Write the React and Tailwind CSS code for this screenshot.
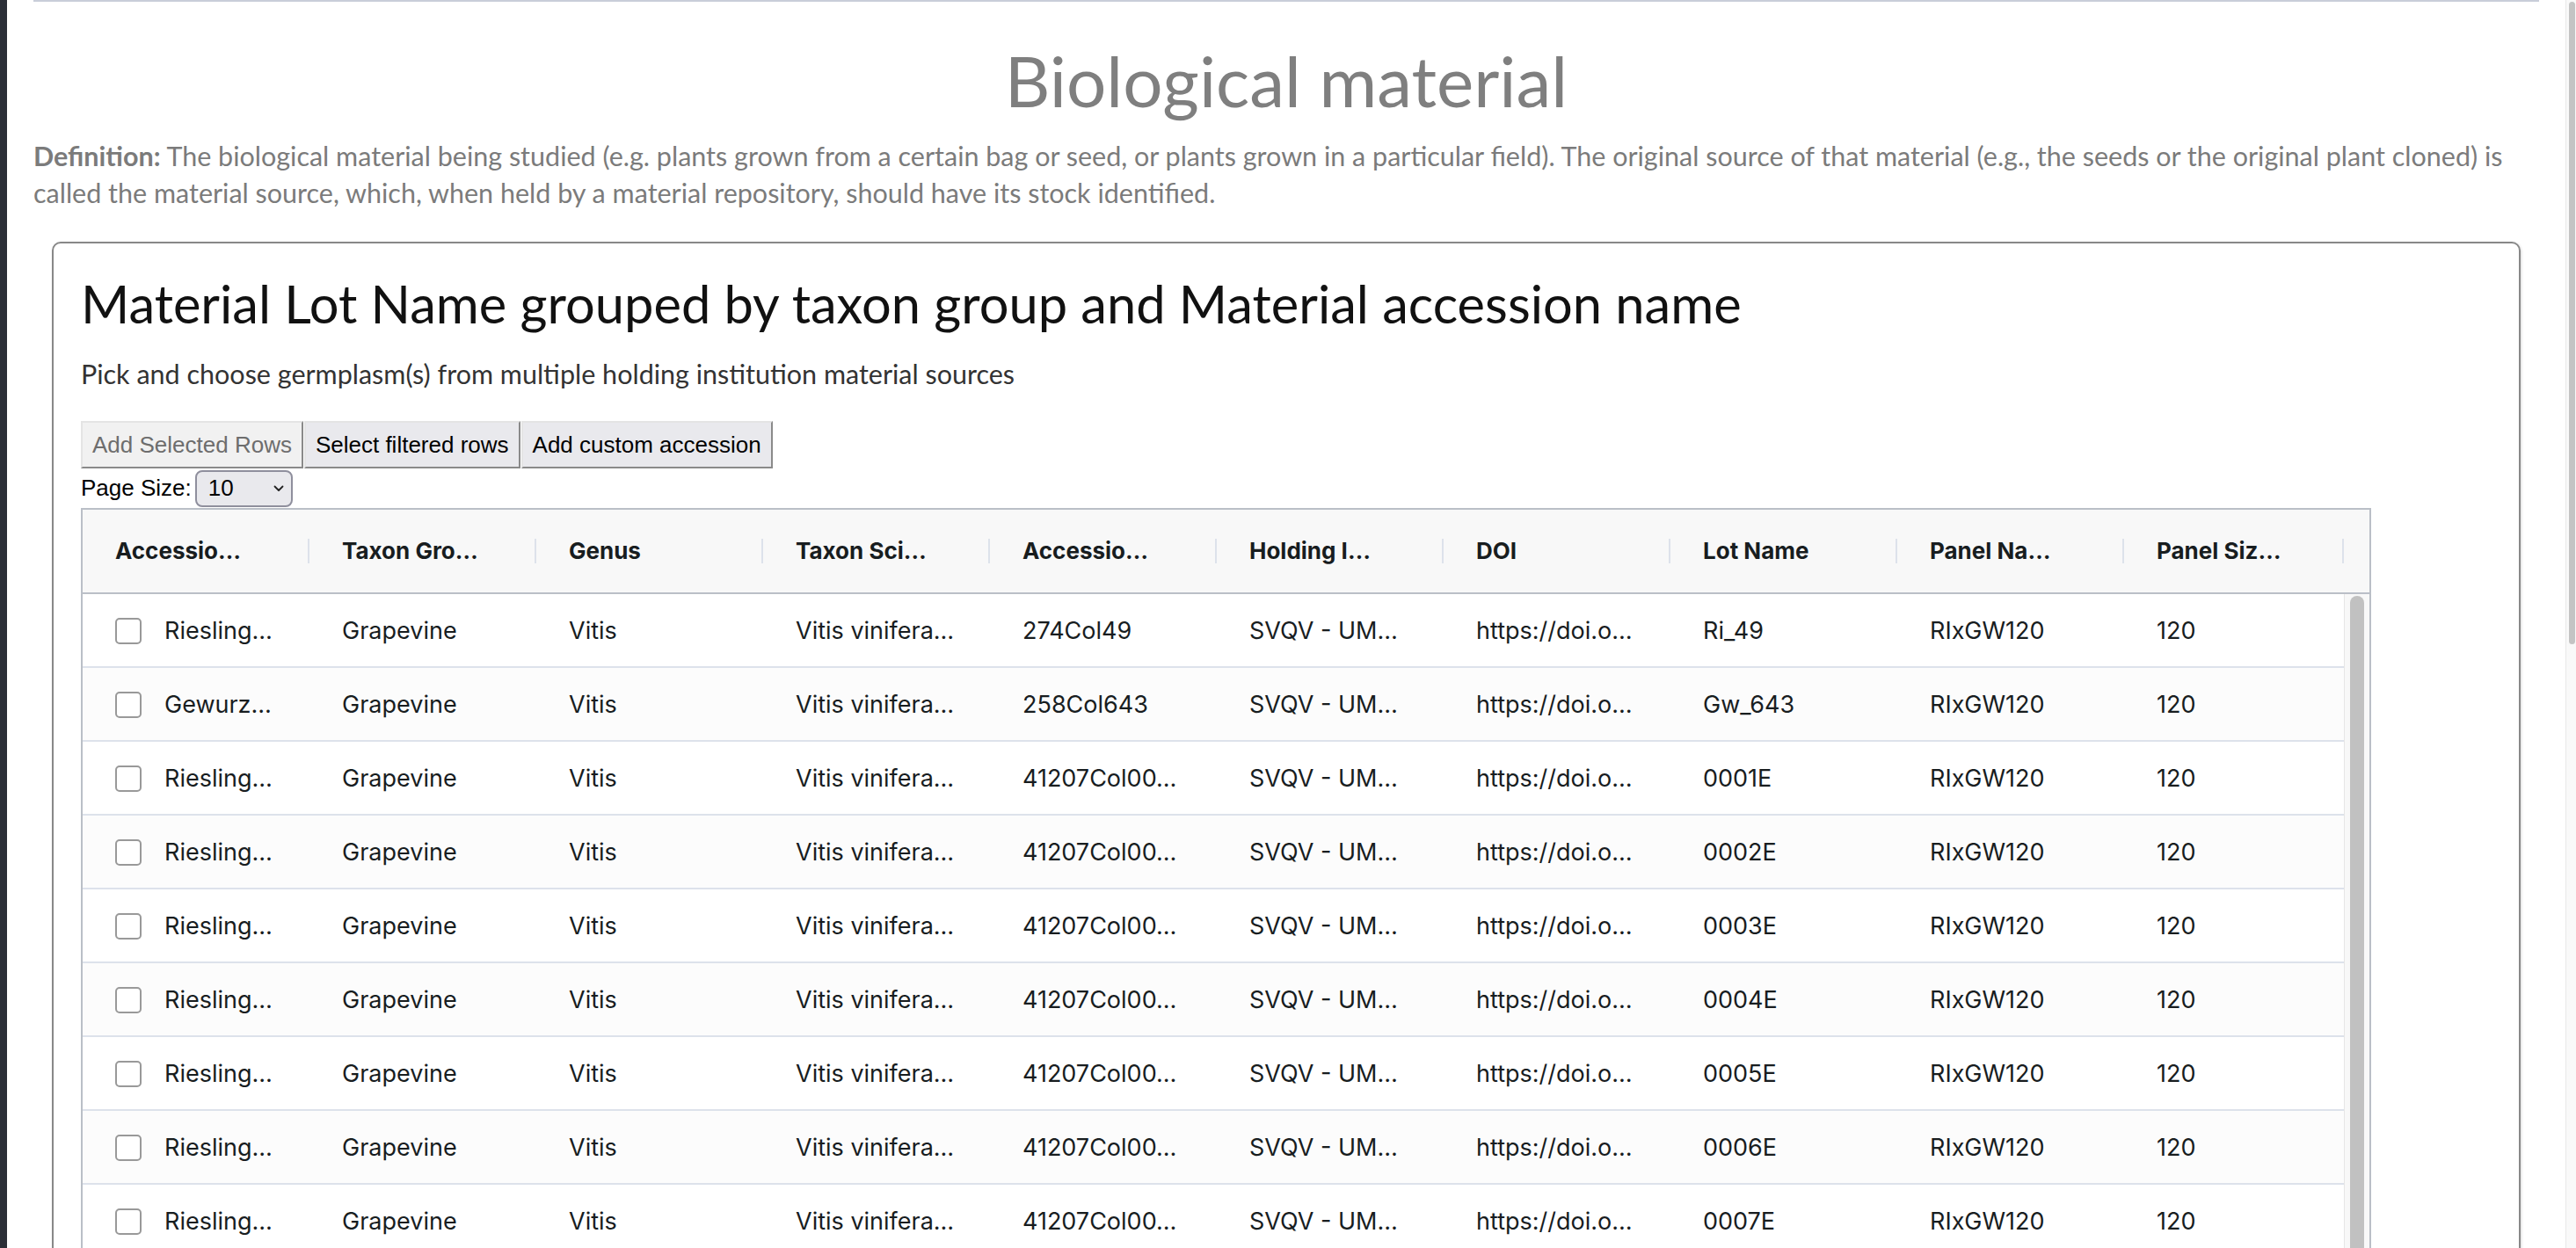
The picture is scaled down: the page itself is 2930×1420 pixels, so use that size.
import React from 'react';

const columns = [
  'Accessio…',
  'Taxon Gro…',
  'Genus',
  'Taxon Sci…',
  'Accessio…',
  'Holding I…',
  'DOI',
  'Lot Name',
  'Panel Na…',
  'Panel Siz…',
];

const lots = ['0001E', '0002E', '0003E', '0004E', '0005E', '0006E', '0007E'];

const rows = [
  ['Riesling…', '274Col49', 'Ri_49'],
  ['Gewurz…', '258Col643', 'Gw_643'],
  ...lots.map((lot) => ['Riesling…', '41207Col00…', lot]),
].map(([name, accession, lot]) => [
  name,
  'Grapevine',
  'Vitis',
  'Vitis vinifera…',
  accession,
  'SVQV - UM…',
  'https://doi.o…',
  lot,
  'RIxGW120',
  '120',
]);

function ActionButton({ children, disabled }) {
  return (
    <button
      disabled={disabled}
      className={`h-[54px] px-[11px] border-2 border-t-[#e4e4e4] border-l-[#e4e4e4] border-b-[#8a8a8a] border-r-[#8a8a8a] font-['Liberation_Sans',Arial,sans-serif] text-[26px] leading-none ${
        disabled ? 'bg-[#f1f1f1] text-[#6d6d6d]' : 'bg-[#e9e9ed] text-black'
      }`}
    >
      {children}
    </button>
  );
}

function MaterialGrid() {
  return (
    <div className="mt-[1px] w-[2605px] border-2 border-[#babfc7] font-['Inter',sans-serif] text-[#181d1f]">
      {/* Header */}
      <div className="flex h-[96px] bg-[#f8f8f8] border-b-2 border-[#babfc7] text-[26px]">
        <div className="grid grid-cols-[repeat(9,258px)_250px]">
          {columns.map((col, i) => (
            <div key={i} className="flex items-center justify-between pl-[37px]">
              <span className="font-bold">{col}</span>
              <span className="h-[28px] w-[2px] bg-[#dde2eb]" />
            </div>
          ))}
        </div>
      </div>

      {/* Body */}
      <div className="flex text-[27px]">
        <div className="w-[2572px]">
          {rows.map((row, r) => (
            <div
              key={r}
              className={`grid grid-cols-[repeat(9,258px)_250px] h-[84px] border-b-2 border-[#dde2eb] ${
                r % 2 === 1 ? 'bg-[#fcfcfc]' : 'bg-white'
              }`}
            >
              {row.map((cell, c) => (
                <div key={c} className="flex items-center pl-[37px] pt-[3px] whitespace-nowrap">
                  {c === 0 && (
                    <span className="mr-[26px] h-[30px] w-[30px] shrink-0 rounded-[5px] border-2 border-[#999] bg-white" />
                  )}
                  {cell}
                </div>
              ))}
            </div>
          ))}
        </div>
        <div className="w-[29px] border-l border-[#e6e6e6] bg-[#f8f8f8] pl-[6px] pt-[2px]">
          <div className="h-[900px] w-[16px] rounded-full bg-[#c1c1c1]" />
        </div>
      </div>
    </div>
  );
}

export default function App() {
  return (
    <div className="flex h-[1420px] w-[2930px] overflow-hidden bg-white">
      <div className="w-[8px] shrink-0 bg-[#2b2f37]" />

      <main className="min-w-0 flex-1 px-[30px] font-['Lato',sans-serif]">
        <div className="h-[2px] bg-[#c9cdd9]" />

        <h1 className="mt-[49px] text-center text-[80px] leading-none text-[#7f7f7f]">
          Biological material
        </h1>

        <p className="mt-[25px] text-[30.5px] leading-[42px] text-[#7b7b7b]">
          <b>Definition:</b> The biological material being studied (e.g. plants grown from a
          certain bag or seed, or plants grown in a particular field). The original source of that
          material (e.g., the seeds or the original plant cloned) is called the material source,
          which, when held by a material repository, should have its stock identified.
        </p>

        <section className="mx-[21px] mt-[35px] rounded-[10px] border-2 border-[#888] pl-[31px] pt-[39px] shadow-[1px_1px_3px_rgba(0,0,0,0.15)]">
          <h2 className="text-[59.6px] leading-none text-[#111]">
            Material Lot Name grouped by taxon group and Material accession name
          </h2>
          <p className="mt-[28px] text-[30.5px] leading-[42px] text-[#333]">
            Pick and choose germplasm(s) from multiple holding institution material sources
          </p>

          <div className="mt-[33px] flex gap-[1px]">
            <ActionButton disabled>Add Selected Rows</ActionButton>
            <ActionButton>Select filtered rows</ActionButton>
            <ActionButton>Add custom accession</ActionButton>
          </div>

          <div className="mt-[2px] flex h-[42px] items-center font-['Liberation_Sans',Arial,sans-serif] text-[26px] text-black">
            <span>Page Size:</span>
            <div className="ml-[4px] flex h-[42px] w-[111px] items-center justify-between rounded-[8px] border-2 border-[#8f8f9d] bg-[#e9e9ed] pl-[13px] pr-[8px]">
              <span>10</span>
              <svg width="12" height="8" viewBox="0 0 12 8" fill="none">
                <path d="M1.5 1.5 6 6l4.5-4.5" stroke="#222" strokeWidth="1.8" strokeLinecap="round" strokeLinejoin="round" />
              </svg>
            </div>
          </div>

          <MaterialGrid />
          <div className="h-[200px]" />
        </section>
      </main>

      <div className="w-[12px] shrink-0 border-l border-[#e8e8e8] bg-[#f9f9f9] pl-[3px] pt-[2px]">
        <div className="h-[731px] w-[7px] rounded-full bg-[#c4c4c4]" />
      </div>
    </div>
  );
}
